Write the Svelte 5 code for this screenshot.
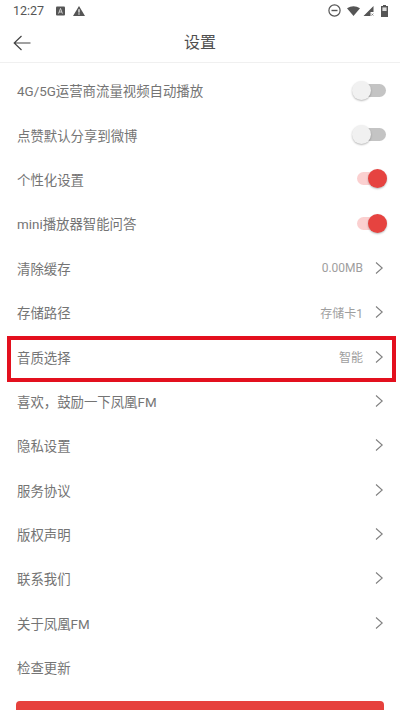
<script>
  const rows = [
    { label: '4G/5G运营商流量视频自动播放', toggle: 'off' },
    { label: '点赞默认分享到微博', toggle: 'off' },
    { label: '个性化设置', toggle: 'on' },
    { label: 'mini播放器智能问答', toggle: 'on' },
    { label: '清除缓存', value: '0.00MB', arrow: true },
    { label: '存储路径', value: '存储卡1', arrow: true },
    { label: '音质选择', value: '智能', arrow: true, marked: true },
    { label: '喜欢，鼓励一下凤凰FM', arrow: true },
    { label: '隐私设置', arrow: true },
    { label: '服务协议', arrow: true },
    { label: '版权声明', arrow: true },
    { label: '联系我们', arrow: true },
    { label: '关于凤凰FM', arrow: true },
    { label: '检查更新' }
  ];
</script>

<div class="page">
  <div class="status">
    <span class="time">12:27</span>
    <svg class="si first" width="9" height="10" viewBox="0 0 9 10"><rect x="0" y="0.5" width="9" height="9" rx="1" fill="#555"/><path d="M2.6 7.6 L4.5 2.4 L6.4 7.6 M3.3 6 H5.7" stroke="#ddd" stroke-width="0.9" fill="none"/></svg>
    <svg class="si tri" width="12" height="10" viewBox="0 0 12 10"><path d="M6 0 L12 10 H0 Z" fill="#555"/><rect x="5.4" y="3.2" width="1.2" height="3.4" fill="#fff"/><rect x="5.4" y="7.4" width="1.2" height="1.2" fill="#fff"/></svg>
    <span class="grow"></span>
    <svg class="si dnd" width="13" height="13" viewBox="0 0 13 13"><circle cx="6.5" cy="6.5" r="5.6" stroke="#555" stroke-width="1.2" fill="none"/><rect x="3.5" y="5.8" width="6" height="1.4" fill="#555"/></svg>
    <svg class="si wifi" width="13" height="10" viewBox="0 0 13 10"><path d="M0 2.2 Q6.5 -1.8 13 2.2 L6.5 10 Z" fill="#555"/></svg>
    <svg class="si sig" width="11" height="10" viewBox="0 0 11 10"><path d="M10.5 0 V6 H7.5 V10 H0.5 Z" fill="#555"/><path d="M8.4 7.6 L10.4 9.6 M10.4 7.6 L8.4 9.6" stroke="#777" stroke-width="0.8"/></svg>
    <svg class="si bat" width="7" height="12" viewBox="0 0 7 12"><path d="M2 0 H5 V1 H7 V12 H0 V1 H2 Z" fill="#555"/><rect x="1.4" y="2.4" width="4.2" height="3.6" fill="#ddd"/></svg>
  </div>

  <header class="nav">
    <svg class="back" width="18" height="16" viewBox="0 0 18 16"><path d="M8.5 1 L1.2 8 L8.5 15 M1.2 8 H17.5" stroke="#444" stroke-width="1.2" fill="none"/></svg>
    <h1>设置</h1>
  </header>

  <div class="list">
    {#each rows as r}
      <div class="row" class:marked={r.marked}>
        <span class="label">{r.label}</span>
        {#if r.value}<span class="value">{r.value}</span>{/if}
        {#if r.arrow}
          <svg class="chev" width="9" height="14" viewBox="0 0 9 14"><path d="M1 1.5 L7.2 7 L1 12.5" stroke="#808080" stroke-width="1.1" fill="none"/></svg>
        {/if}
        {#if r.toggle}
          <span class="switch {r.toggle}"><span class="knob"></span></span>
        {/if}
      </div>
    {/each}
  </div>

  <div class="btn"></div>
</div>

<style>
  :global(body) { margin: 0; background: #fff; }
  .page {
    position: relative;
    width: 400px;
    height: 710px;
    overflow: hidden;
    background: #fff;
    font-family: "Roboto", "Noto Sans CJK SC", sans-serif;
    color: #747474;
  }
  .status {
    height: 21px;
    display: flex;
    align-items: center;
    padding: 0 12px 0 13px;
  }
  .time { font-size: 12.5px; color: #555; width: 43px; }
  .si { flex: none; }
  .si.first { margin-right: 8px; }
  .grow { flex: 1; }
  .si.dnd { margin-right: 6px; }
  .si.wifi { margin-right: 3px; }
  .si.sig { margin-right: 7px; }
  .nav {
    height: 42px;
    padding-bottom: 2px;
    box-sizing: border-box;
    display: flex;
    align-items: center;
    justify-content: center;
    position: relative;
    border-bottom: 1px solid #f0f0f0;
  }
  .back { position: absolute; left: 13px; top: 14px; }
  h1 { margin: 0; font-size: 16px; font-weight: 400; color: #4f4f4f; }
  .list { padding-top: 5px; }
  .row {
    height: 44.4px;
    display: flex;
    align-items: center;
    padding: 0 16px 0 17px;
    font-size: 13.4px;
    position: relative;
    box-sizing: border-box;
  }
  .row.marked::after {
    content: "";
    position: absolute;
    left: 7px;
    right: 4px;
    top: 1.5px;
    bottom: -3.5px;
    border: 4.5px solid #e3101e;
    box-sizing: border-box;
  }
  .label { flex: 1; }
  .value { font-size: 12px; color: #9e9e9e; margin-right: 12px; }
  .chev { flex: none; }
  .switch {
    position: relative;
    height: 13px;
    border-radius: 7px;
    flex: none;
  }
  .switch.off { background: #c4c4c4; width: 33px; margin-right: -2px; }
  .switch.on { background: #fbd0d0; width: 30px; margin-right: -3px; }
  .knob {
    position: absolute;
    top: -3px;
    width: 19px;
    height: 19px;
    border-radius: 50%;
    box-shadow: 0 1px 2px rgba(0,0,0,.28);
  }
  .off .knob { left: -1px; background: #f1f1f1; }
  .on .knob { right: 0; background: #e64340; }
  .btn {
    position: absolute;
    left: 16px;
    right: 16px;
    top: 701px;
    height: 44px;
    background: #e6413d;
    border-radius: 4px;
  }
</style>
